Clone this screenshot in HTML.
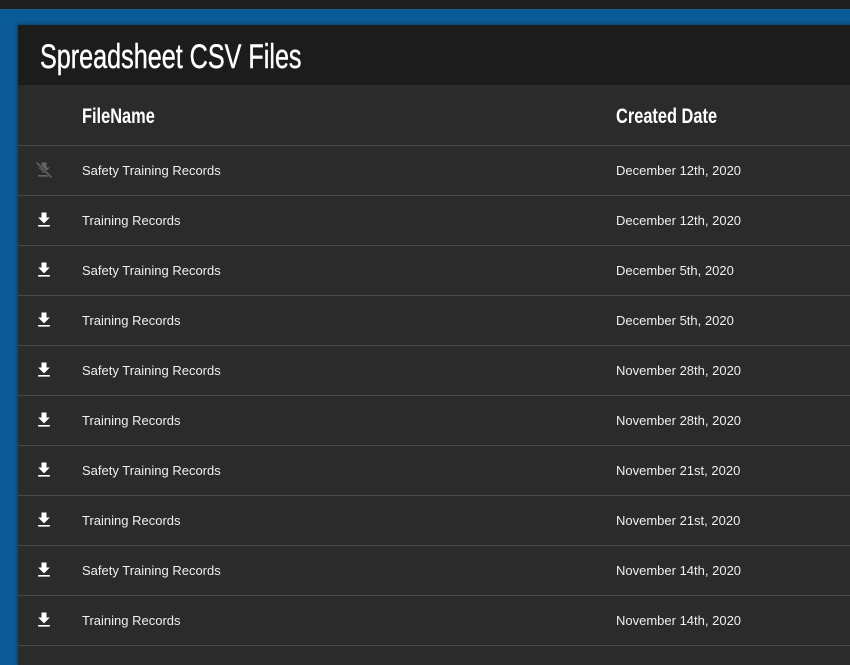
<!DOCTYPE html>
<html><head><meta charset="utf-8"><style>
*{margin:0;padding:0;box-sizing:border-box}
body{width:850px;height:641px;overflow:hidden;background:#0b5b98;font-family:"Liberation Sans",sans-serif;position:relative}
.top{position:absolute;left:0;top:0;width:850px;height:9px;background:#1f1f1f}
.card{position:absolute;left:18px;top:25px;width:840px;height:640px;background:#2b2b2b;box-shadow:0 0 4px rgba(0,0,0,.5)}
.title{height:60px;background:#1c1c1c;color:#fff;font-size:34px;padding-left:22px;line-height:64px;-webkit-text-stroke:0.4px #fff}
.title span{display:inline-block;transform:scaleX(0.74);transform-origin:left center}
.hdr{height:61px;position:relative;color:#fff;font-weight:bold;font-size:21px;border-bottom:1px solid #4a4a4a}
.hdr span{position:absolute;top:20px;transform:scaleX(0.78);transform-origin:left center}
.row{height:50px;position:relative;border-bottom:1px solid #4a4a4a;color:#f0f0f0;font-size:13px}
.row span{position:absolute;top:17px}
.row svg{position:absolute;left:16px;top:14px}
</style></head><body>
<div class="top"></div>
<div class="card">
<div class="title"><span>Spreadsheet CSV Files</span></div>
<div class="hdr"><span style="left:64px">FileName</span><span style="left:598px">Created Date</span></div>
<div class="row"><svg width="20" height="20" viewBox="0 0 24 24"><path fill="#666" d="M19 9h-4V3H9v6H5l7 7 7-7zM5 18v2h14v-2H5z"/><path d="M3 3l18 18" stroke="#2b2b2b" stroke-width="3.5"/><path d="M3 3l18 18" stroke="#666" stroke-width="1.8"/></svg><span style="left:64px">Safety Training Records</span><span style="left:598px">December 12th, 2020</span></div>
<div class="row"><svg width="20" height="20" viewBox="0 0 24 24"><path fill="#fff" d="M19 9h-4V3H9v6H5l7 7 7-7zM5 18v2h14v-2H5z"/></svg><span style="left:64px">Training Records</span><span style="left:598px">December 12th, 2020</span></div>
<div class="row"><svg width="20" height="20" viewBox="0 0 24 24"><path fill="#fff" d="M19 9h-4V3H9v6H5l7 7 7-7zM5 18v2h14v-2H5z"/></svg><span style="left:64px">Safety Training Records</span><span style="left:598px">December 5th, 2020</span></div>
<div class="row"><svg width="20" height="20" viewBox="0 0 24 24"><path fill="#fff" d="M19 9h-4V3H9v6H5l7 7 7-7zM5 18v2h14v-2H5z"/></svg><span style="left:64px">Training Records</span><span style="left:598px">December 5th, 2020</span></div>
<div class="row"><svg width="20" height="20" viewBox="0 0 24 24"><path fill="#fff" d="M19 9h-4V3H9v6H5l7 7 7-7zM5 18v2h14v-2H5z"/></svg><span style="left:64px">Safety Training Records</span><span style="left:598px">November 28th, 2020</span></div>
<div class="row"><svg width="20" height="20" viewBox="0 0 24 24"><path fill="#fff" d="M19 9h-4V3H9v6H5l7 7 7-7zM5 18v2h14v-2H5z"/></svg><span style="left:64px">Training Records</span><span style="left:598px">November 28th, 2020</span></div>
<div class="row"><svg width="20" height="20" viewBox="0 0 24 24"><path fill="#fff" d="M19 9h-4V3H9v6H5l7 7 7-7zM5 18v2h14v-2H5z"/></svg><span style="left:64px">Safety Training Records</span><span style="left:598px">November 21st, 2020</span></div>
<div class="row"><svg width="20" height="20" viewBox="0 0 24 24"><path fill="#fff" d="M19 9h-4V3H9v6H5l7 7 7-7zM5 18v2h14v-2H5z"/></svg><span style="left:64px">Training Records</span><span style="left:598px">November 21st, 2020</span></div>
<div class="row"><svg width="20" height="20" viewBox="0 0 24 24"><path fill="#fff" d="M19 9h-4V3H9v6H5l7 7 7-7zM5 18v2h14v-2H5z"/></svg><span style="left:64px">Safety Training Records</span><span style="left:598px">November 14th, 2020</span></div>
<div class="row"><svg width="20" height="20" viewBox="0 0 24 24"><path fill="#fff" d="M19 9h-4V3H9v6H5l7 7 7-7zM5 18v2h14v-2H5z"/></svg><span style="left:64px">Training Records</span><span style="left:598px">November 14th, 2020</span></div>
</div>
</body></html>
